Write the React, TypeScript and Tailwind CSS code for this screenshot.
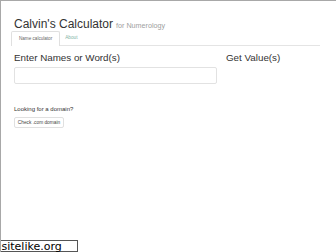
import React from "react";

export default function App() {
  return (
    <div
      className="relative w-[336px] h-[252px] overflow-hidden bg-white border-t-[1.5px] border-l-[1.5px] border-[#a8a8a8]"
      style={{ fontFamily: '"Liberation Sans", Arial, sans-serif' }}
    >
      <div className="pt-[17px]">
        <h1 className="ml-[13px] flex items-baseline leading-none text-[12px] text-[#333]">
          <span>Calvin's Calculator</span>
          <span className="ml-[3px] text-[7.2px] text-[#a0a0a0]">for Numerology</span>
        </h1>
        <div className="ml-[10px] mt-[1px] w-[309px] flex border-b border-[#e4e4e4] h-[15px]">
          <div className="h-[15px] -mb-px border border-b-0 border-[#e0e0e0] rounded-t-[2px] bg-white px-[7px] flex items-center text-[4.6px] text-[#666]">
            Name calculator
          </div>
          <div className="px-[5px] flex items-center text-[4.7px] text-[#7fb3a6]">About</div>
        </div>
        <div className="ml-[13px] mt-[6px] flex">
          <div className="w-[203px]">
            <div className="text-[9.8px] leading-[12px] text-[#333]">Enter Names or Word(s)</div>
            <div className="mt-[3px] h-[17px] w-[203px] border border-[#e2e2e2] rounded-[2px]" />
          </div>
          <div className="ml-[9px] text-[9.8px] leading-[12px] text-[#333]">Get Value(s)</div>
        </div>
        <div className="ml-[13px] mt-[21px] text-[6px] leading-[8px] text-[#333]">Looking for a domain?</div>
        <div className="ml-[13px] mt-[4px] w-[50px] h-[11px] border border-[#e0e0e0] rounded-[2px] flex items-center justify-center text-[4.8px] text-[#444]">
          Check .com domain
        </div>
      </div>
      <div
        className="absolute left-[-1.5px] bottom-0 w-[78px] h-[12px] border border-[#555] bg-white flex items-center pl-[1px] text-[11px] leading-none text-black"
        style={{ fontFamily: '"DejaVu Sans", Verdana, sans-serif' }}
      >
        sitelike.org
      </div>
    </div>
  );
}
